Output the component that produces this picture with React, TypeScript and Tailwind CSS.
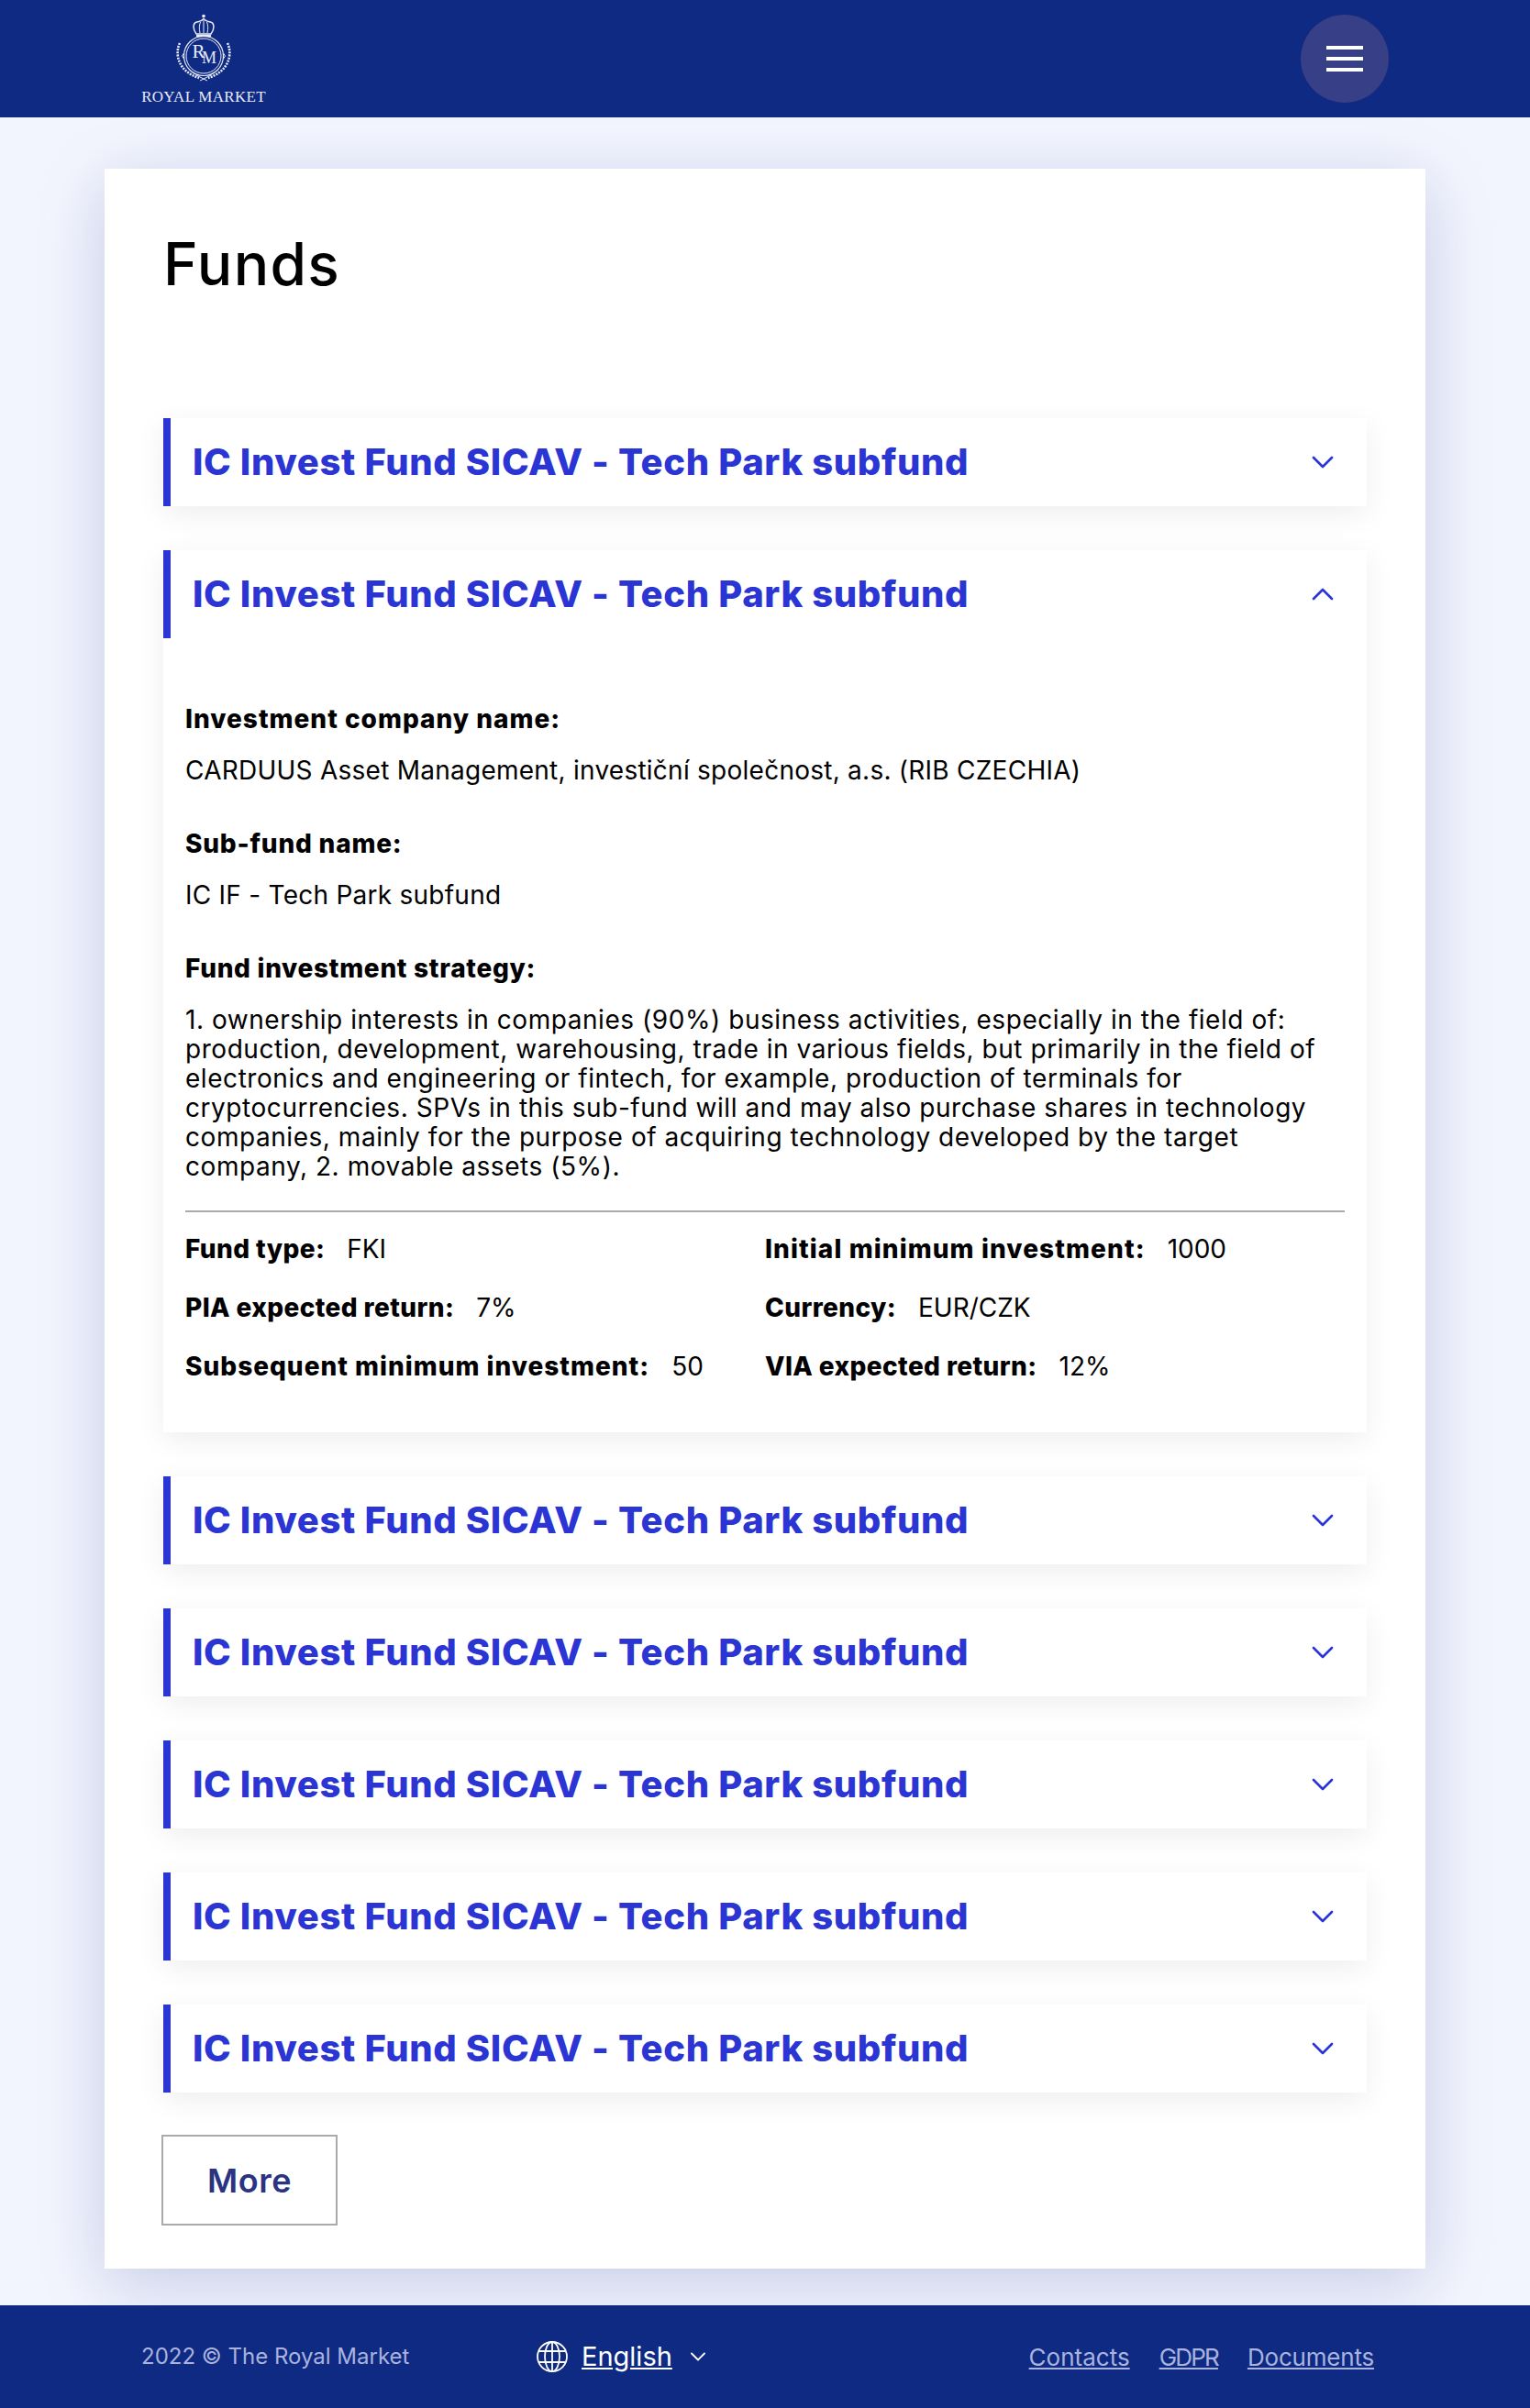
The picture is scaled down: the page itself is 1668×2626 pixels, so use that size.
import { ChevronDown, ChevronUp } from 'lucide-react';
import React from 'react';

const title = 'IC Invest Fund SICAV - Tech Park subfund';

function Logo() {
    return <div className="flex flex-col items-center w-[136px]">
        <svg width="64" height="76" viewBox="0 0 64 76" fill="none" stroke="#e8ebf7" className="mt-[14px]">
            <circle cx="32" cy="3.500" r="1.800" fill="#e8ebf7" stroke="none" />
            <path d="M24 23 C20 18 20 11 24.500 10 C27 9.500 29 10 32 6.500 C35 10 37 9.500 39.500 10 C44 11 44 18 40 23 Z" strokeWidth="1.500" />
            <path d="M28 22 C27 17 27 14 28.500 10 M36 22 C37 17 37 14 35.500 10 M32 8 V22" strokeWidth="1" />
            <path d="M24 25 H40" strokeWidth="2.200" />
            <circle cx="32" cy="47" r="21.500" strokeWidth="1.200" />
            <circle cx="32" cy="47" r="19" strokeWidth="1" />
            <path d="M10.500 44 L8.500 47 L10.500 50 M53.500 44 L55.500 47 L53.500 50" strokeWidth="1" />
            <text x="19.500" y="49" fontFamily="Liberation Serif" fontSize="21" fill="#e8ebf7" stroke="none">R</text>
            <text x="30" y="55" fontFamily="Liberation Serif" fontSize="18" fill="#e8ebf7" stroke="none">M</text>
            <path d="M6 33 C0 46 5 64 27 71 M58 33 C64 46 59 64 37 71" strokeWidth="2.600" strokeDasharray="2 1.200" />
            <path d="M24 68 L36 74 M40 68 L28 74" strokeWidth="1" />
        </svg>
        <span className="font-['Liberation_Serif',serif] text-[17px] leading-[20px] tracking-[0.3px] text-[#e8ebf7] whitespace-nowrap mt-[6px]">ROYAL MARKET</span>
    </div>
}

function FundRow(props: { open?: boolean }) {
    const Chevron = props.open ? ChevronUp : ChevronDown;
    return <div className="flex items-center justify-between h-[96px] border-l-8 border-[#2b35d3] pl-[24px] pr-[28px]">
        <h2 className="text-[40px] leading-[48px] font-extrabold tracking-[0.65px] text-[#2b35d3]">{title}</h2>
        <Chevron className="w-[40px] h-[40px] text-[#2b35d3]" strokeWidth={1.6} />
    </div>
}

function Fund(props: { children?: React.ReactNode, open?: boolean }) {
    return <div className="bg-white shadow-[0_8px_30px_rgba(0,0,0,0.07)]">
        <FundRow open={props.open} />
        {props.children}
    </div>
}

function Stat(props: { label: string, value: string, tracking: string }) {
    return <div className="flex h-[64px] items-center gap-[24px] text-[28px] leading-[32px]">
        <span className={'font-extrabold ' + props.tracking}>{props.label}</span>
        <span>{props.value}</span>
    </div>
}

export default function App() {
    return <div className="bg-[#f3f5fe] font-['Inter',sans-serif] text-black">
        <header className="h-[128px] bg-[#0f2a83] flex items-start justify-between pl-[154px] pr-[154px]">
            <Logo />
            <button className="mt-[16px] w-[96px] h-[96px] rounded-full bg-[#373f87] flex flex-col items-center justify-center gap-[8px]">
                <span className="block w-[40px] h-[4px] bg-white" />
                <span className="block w-[40px] h-[4px] bg-white" />
                <span className="block w-[40px] h-[4px] bg-white" />
            </button>
        </header>

        <main className="pt-[56px] pb-[40px] px-[114px]">
            <div className="bg-white px-[64px] pt-[64px] pb-[47px] shadow-[0_16px_70px_rgba(15,42,131,0.2)]">
                <h1 className="text-[64px] leading-[80px] font-medium tracking-[1.3px] mb-[128px]">Funds</h1>

                <div className="flex flex-col gap-[48px]">
                    <Fund />
                    <Fund open>
                        <div className="px-[24px] pt-[72px] pb-[40px] text-[28px] leading-[32px]">
                            <p className="font-extrabold tracking-[1px]">Investment company name:</p>
                            <p className="mt-[24px] tracking-[0.25px]">CARDUUS Asset Management, investiční společnost, a.s. (RIB CZECHIA)</p>
                            <p className="font-extrabold tracking-[0.8px] mt-[48px]">Sub-fund name:</p>
                            <p className="mt-[24px] tracking-[0.25px]">IC IF - Tech Park subfund</p>
                            <p className="font-extrabold tracking-[0.7px] mt-[48px]">Fund investment strategy:</p>
                            <p className="mt-[24px] tracking-[0.55px]">1. ownership interests in companies (90%) business activities, especially in the field of: production, development, warehousing, trade in various fields, but primarily in the field of electronics and engineering or fintech, for example, production of terminals for cryptocurrencies. SPVs in this sub-fund will and may also purchase shares in technology companies, mainly for the purpose of acquiring technology developed by the target company, 2. movable assets (5%).</p>
                            <div className="h-[2px] bg-[#aaaaaa] mt-[32px] mb-[8px]" />
                            <div className="grid grid-cols-2">
                                <Stat label="Fund type:" value="FKI" tracking="tracking-[0.4px]" />
                                <Stat label="Initial minimum investment:" value="1000" tracking="tracking-[1.1px]" />
                                <Stat label="PIA expected return:" value="7%" tracking="tracking-[0.4px]" />
                                <Stat label="Currency:" value="EUR/CZK" tracking="tracking-[0.4px]" />
                                <Stat label="Subsequent minimum investment:" value="50" tracking="tracking-[1px]" />
                                <Stat label="VIA expected return:" value="12%" tracking="tracking-[0.4px]" />
                            </div>
                        </div>
                    </Fund>
                    <Fund />
                    <Fund />
                    <Fund />
                    <Fund />
                    <Fund />
                </div>

                <button className="block mt-[46px] ml-[-2px] w-[192px] h-[99px] border-[2px] border-[#aaaaaa] text-[36px] font-semibold tracking-[0.5px] text-[#2a3482]">More</button>
            </div>
        </main>

        <footer className="h-[112px] bg-[#0f2a83] flex items-center pl-[154px] pr-[170px] text-[26px] text-[#aab3dd]">
            <span className="w-[431px] text-[24px]">2022 © The Royal Market</span>
            <svg width="34" height="34" viewBox="0 0 34 34" fill="none" stroke="white" strokeWidth="1.800">
                <circle cx="17" cy="17" r="16" />
                <ellipse cx="17" cy="17" rx="8" ry="16" />
                <path d="M17 1 V33 M3 11 H31 M3 23 H31" />
            </svg>
            <a className="ml-[15px] text-[29px] text-white underline">English</a>
            <ChevronDown className="ml-[14px] w-[28px] h-[28px] text-white" strokeWidth={1.6} />
            <nav className="ml-auto flex gap-[32px]">
                <a className="underline">Contacts</a>
                <a className="underline tracking-[-1.8px]">GDPR</a>
                <a className="underline tracking-[-0.2px]">Documents</a>
            </nav>
        </footer>
    </div>
}
